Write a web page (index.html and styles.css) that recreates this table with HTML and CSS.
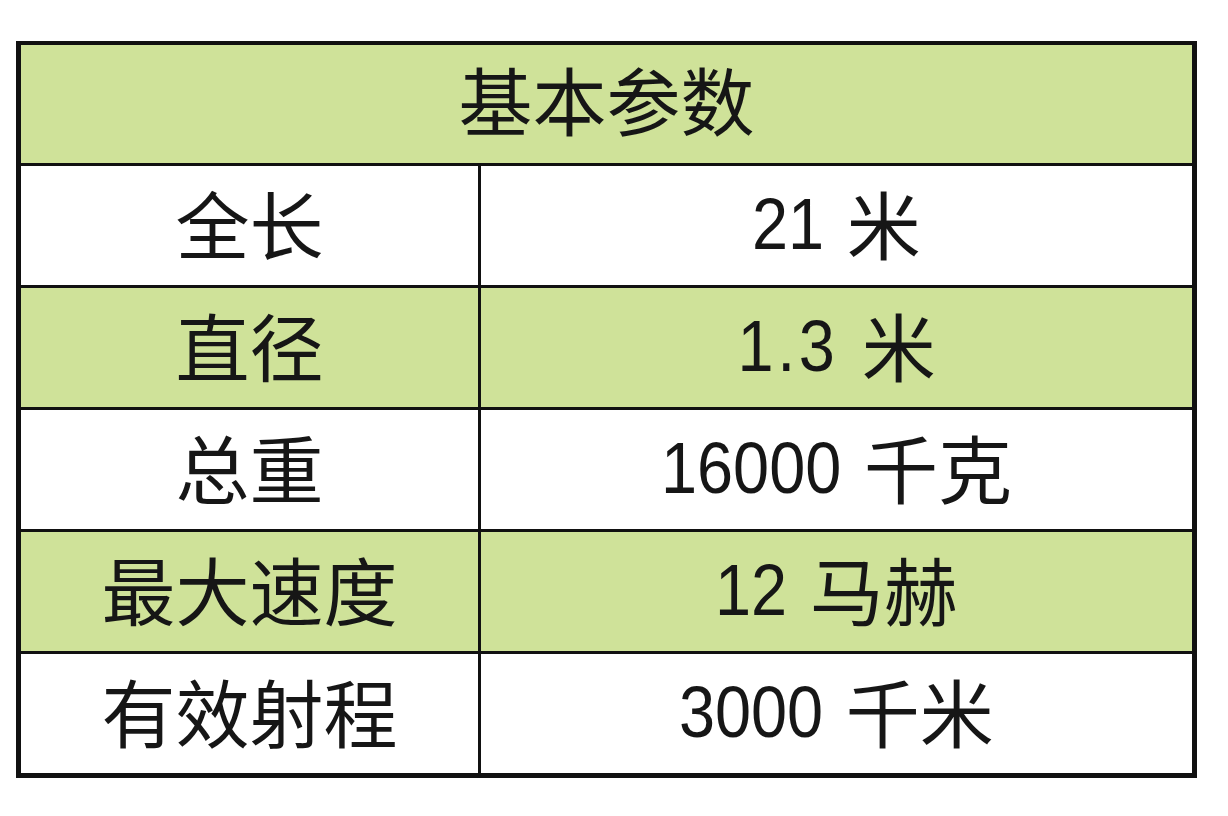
FILE: index.html
```html
<!DOCTYPE html>
<html lang="zh-CN">
<head>
<meta charset="utf-8">
<title>基本参数</title>
<link rel="stylesheet" href="styles.css">
</head>
<body>
<div class="sheet">
  <div class="cell head green">基本参数</div>
  <div class="cell">全长</div>
  <div class="cell"><span class="num" style="--w: 1.112">21</span> 米</div>
  <div class="cell green">直径</div>
  <div class="cell green"><span class="num dot" style="--w: 1.39">1.3</span> 米</div>
  <div class="cell">总重</div>
  <div class="cell"><span class="num" style="--w: 2.78">16000</span> 千克</div>
  <div class="cell green">最大速度</div>
  <div class="cell green"><span class="num" style="--w: 1.112">12</span> 马赫</div>
  <div class="cell">有效射程</div>
  <div class="cell"><span class="num" style="--w: 2.224">3000</span> 千米</div>
</div>
</body>
</html>
```
FILE: styles.css
```css
html, body {
  margin: 0;
  padding: 0;
  background: #ffffff;
}
body {
  padding: 41px 0 0 16px;
}
.sheet {
  width: 1181px;
  box-sizing: border-box;
  display: grid;
  grid-template-columns: 457px 711px;
  grid-template-rows: 118px repeat(5, 119px);
  gap: 3px;
  padding: 4px 5px 5px 5px;
  background: #111111;
}
.cell {
  background: #ffffff;
  display: flex;
  align-items: center;
  justify-content: center;
  box-sizing: border-box;
  padding-bottom: 8px;
  font-family: "Noto Sans CJK SC", "Noto Sans", sans-serif;
  font-weight: 400;
  font-size: 74px;
  color: #161616;
  white-space: pre;
  line-height: 1;
}
.head {
  grid-column: 1 / 3;
  padding-bottom: 12px;
}
.green {
  background: #cfe299;
}
.num {
  display: inline-block;
  font-family: "Liberation Sans", "Arial", sans-serif;
  font-size: 72px;
  transform: scaleX(0.9);
  margin: 0 calc(var(--w) * -0.05em + 6px) 0 calc(var(--w) * -0.05em);
  position: relative;
  top: 2px;
}
.dot {
  letter-spacing: 4px;
}
```
